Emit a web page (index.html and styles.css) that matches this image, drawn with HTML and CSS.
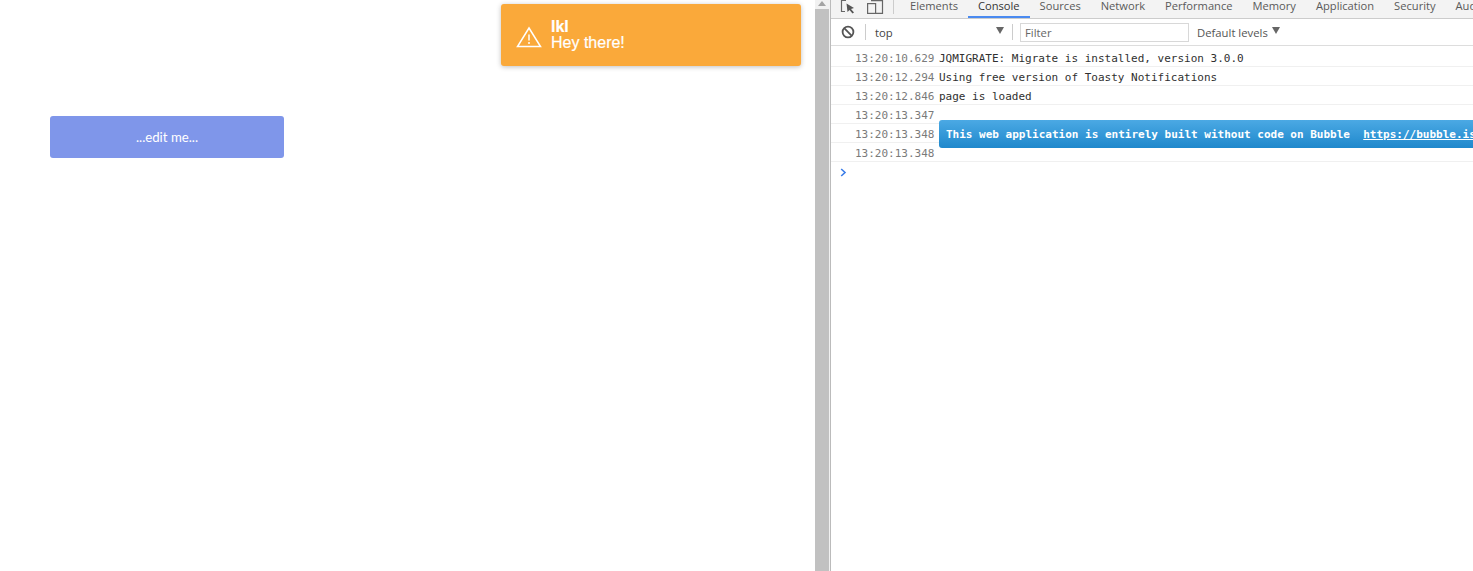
FILE: index.html
```html
<!DOCTYPE html>
<html lang="en">
<head>
<meta charset="utf-8">
<title>Toasty Notifications</title>
<link rel="stylesheet" href="styles.css">
</head>
<body>
<main class="page">
  <button class="edit-btn">...edit me...</button>
  <div class="toast">
    <svg class="toast-icon" width="26" height="22" viewBox="0 0 26 22" fill="none" stroke="#fff" stroke-width="1.5" stroke-linejoin="miter">
      <path d="M13 2 L24.5 20.5 H1.5 Z"/>
      <path d="M13 8.5 V14.5"/>
      <path d="M13 16 V18"/>
    </svg>
    <div class="toast-text">
      <div class="toast-title">lkl</div>
      <div class="toast-msg">Hey there!</div>
    </div>
  </div>
</main>
<div class="scrollbar">
  <div class="scroll-arrow"></div>
  <div class="scroll-thumb"></div>
</div>
<section class="devtools">
  <nav class="tabbar">
    <svg class="tool-icon" width="16" height="14" viewBox="0 0 16 14" fill="none">
      <path d="M6 0.5 H1.5 V11.5 H5" stroke="#666" stroke-width="1.2"/>
      <path d="M6.5 3.5 L14 8 L11 9 L14 12.5 L12.5 13.5 L9.5 10 L7.5 12 Z" fill="#555"/>
    </svg>
    <svg class="tool-icon device" width="17" height="14" viewBox="0 0 17 14" fill="none">
      <rect x="0.6" y="3.6" width="8" height="9.8" stroke="#666" stroke-width="1.2"/>
      <path d="M4 0.6 H15.5 V13.4 H9" stroke="#666" stroke-width="1.2"/>
    </svg>
    <span class="tab-sep"></span>
    <div class="tabs">
      <span class="tab">Elements</span>
      <span class="tab active">Console</span>
      <span class="tab">Sources</span>
      <span class="tab">Network</span>
      <span class="tab">Performance</span>
      <span class="tab">Memory</span>
      <span class="tab">Application</span>
      <span class="tab">Security</span>
      <span class="tab">Audits</span>
    </div>
  </nav>
  <div class="toolbar">
    <svg class="clear-icon" width="14" height="14" viewBox="0 0 14 14" fill="none" stroke="#555" stroke-width="1.8">
      <circle cx="7" cy="7" r="5.4"/>
      <path d="M3.2 3.2 L10.8 10.8"/>
    </svg>
    <span class="bar-sep first"></span>
    <div class="context"><span>top</span><i class="caret"></i></div>
    <span class="bar-sep"></span>
    <div class="filter">Filter</div>
    <div class="levels">Default levels<i class="caret small"></i></div>
  </div>
  <div class="log">
    <div class="row"><span class="time">13:20:10.629</span><span>JQMIGRATE: Migrate is installed, version 3.0.0</span></div>
    <div class="row"><span class="time">13:20:12.294</span><span>Using free version of Toasty Notifications</span></div>
    <div class="row"><span class="time">13:20:12.846</span><span>page is loaded</span></div>
    <div class="row"><span class="time">13:20:13.347</span></div>
    <div class="row"><span class="time">13:20:13.348</span>
      <span class="badge">This web application is entirely built without code on Bubble&nbsp;&nbsp;<a class="badge-link">https://bubble.is</a></span>
    </div>
    <div class="row"><span class="time">13:20:13.348</span></div>
    <div class="prompt">
      <svg width="7" height="9" viewBox="0 0 7 9" fill="none" stroke="#3b7de8" stroke-width="1.6"><path d="M1.2 1 L5 4.5 L1.2 8"/></svg>
    </div>
  </div>
</section>
</body>
</html>
```
FILE: styles.css
```css
* { box-sizing: border-box; }
html, body { margin: 0; height: 100%; overflow: hidden; background: #fff; }
body { display: flex; width: 1473px; height: 571px; }

.page { position: relative; width: 815px; flex: none; padding: 116px 0 0 50px; }
.edit-btn {
  display: block; width: 234px; height: 42px; padding: 0; border: 0; border-radius: 3px;
  background: #7f96ea; color: #fff; font: 13.2px Lato, sans-serif;
}
.toast {
  position: absolute; left: 501px; top: 4px; width: 300px; height: 62px;
  display: flex; align-items: center; padding-left: 15px;
  background: #faa93a; border-radius: 3px; color: #fff;
  box-shadow: 0 1px 5px rgba(0,0,0,.25);
}
.toast-icon { flex: none; margin: 3px 9px 0 0; }
.toast-text { font: 16px/16px "Liberation Sans", Arial, sans-serif; margin-top: -1px; }
.toast-title { font-weight: 700; -webkit-text-stroke: .2px #fff; }
.toast-msg { -webkit-text-stroke: .2px #fff; }

.scrollbar { position: relative; width: 15px; flex: none; background: #f1f1f1; }
.scroll-arrow {
  position: absolute; left: 3px; top: 1px; width: 0; height: 0;
  border: 4px solid transparent; border-top: 0; border-bottom: 5px solid #a3a3a3;
}
.scroll-thumb { position: absolute; left: 0; right: 1px; top: 9px; bottom: 0; background: #c1c1c1; }

.devtools { flex: 1; min-width: 0; overflow: hidden; border-left: 1px solid #bbb; font: 11.3px "Open Sans", sans-serif; color: #333; }
.tabbar { display: flex; align-items: center; height: 19px; background: #f3f3f3; border-bottom: 1px solid #ccc; padding-left: 9px; }
.tool-icon { flex: none; margin-top: -4px; }
.device { margin-left: 11px; }
.tab-sep { width: 1px; height: 14px; margin: -4px 6px 0 9px; background: #ccc; flex: none; }
.tabs { display: flex; height: 18px; flex: none; }
.tab { padding: 0 10px; line-height: 12px; font-size: 11.15px; color: #5a5a5a; white-space: nowrap; }
.tab.active { color: #333; border-bottom: 2px solid #4a8af0; }

.toolbar { display: flex; align-items: center; height: 27px; border-bottom: 1px solid #ddd; padding-left: 10px; background: #fff; color: #444; }
.clear-icon { flex: none; }
.bar-sep { width: 1px; height: 16px; background: #ccc; flex: none; }
.bar-sep.first { margin-left: 10px; }
.context { display: flex; justify-content: space-between; align-items: center; width: 146px; padding: 0 8px 0 9px; flex: none; }
.caret { width: 0; height: 0; border: 4.5px solid transparent; border-top: 7px solid #666; border-bottom: 0; margin-top: -3px; }
.caret.small { border-width: 4px; border-top-width: 7px; border-bottom: 0; margin-left: 4px; }
.filter { width: 169px; height: 19px; margin-left: 7px; padding-left: 4px; border: 1px solid #d8d8d8; line-height: 17px; color: #666; flex: none; }
.levels { display: flex; align-items: center; margin-left: 8px; color: #555; white-space: nowrap; }

.log { padding-top: 2px; font: 11px "DejaVu Sans Mono", monospace; color: #303030; }
.row { position: relative; display: flex; height: 19px; padding: 3px 0 0 24px; line-height: 16px; border-bottom: 1px solid #f0f0f0; white-space: pre; }
.time { width: 84px; flex: none; color: #7a7a7a; }
.badge {
  position: absolute; left: 108px; top: -4px; width: 560px; height: 28px; padding-left: 7px;
  line-height: 30px; font-weight: 700; color: #fff; border-radius: 3px 0 0 3px;
  background: linear-gradient(#4ba9e4, #1f88cc);
}
.badge-link { text-decoration: underline; }
.prompt { padding: 6px 0 0 9px; line-height: 0; }
```
